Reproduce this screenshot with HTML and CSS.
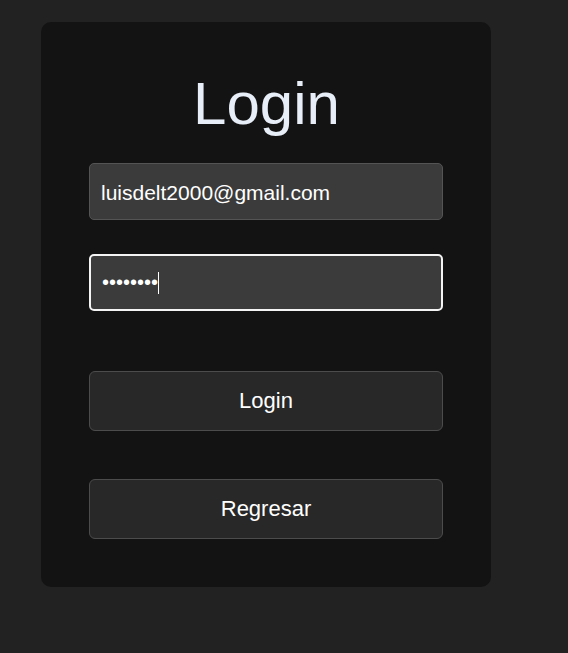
FILE: index.html
```html
<!DOCTYPE html>
<html lang="es">
<head>
<meta charset="utf-8">
<title>Login</title>
<link rel="stylesheet" href="styles.css">
</head>
<body>
  <main class="card">
    <h1 class="title">Login</h1>
    <form class="form">
      <input class="field" type="email" value="luisdelt2000@gmail.com">
      <div class="field field--focus"><span class="dots">••••••••</span><span class="caret"></span></div>
      <button type="button" class="btn btn--first">Login</button>
      <button type="button" class="btn btn--second">Regresar</button>
    </form>
  </main>
</body>
</html>
```
FILE: styles.css
```css
html, body {
  margin: 0;
  padding: 0;
  background: #222222;
  font-family: "Liberation Sans", Arial, sans-serif;
}
body {
  padding: 22px 0 0 41px;
}
.card {
  box-sizing: border-box;
  width: 450px;
  height: 565px;
  background: #131313;
  border-radius: 10px;
  padding: 52px 47px 0 48px;
}
.title {
  margin: 0;
  font-size: 60px;
  line-height: 60px;
  font-weight: 400;
  color: #e8eef8;
  text-align: center;
}
.form {
  display: flex;
  flex-direction: column;
  margin-top: 29px;
}
.field {
  box-sizing: border-box;
  width: 354px;
  height: 57px;
  background: #3b3b3b;
  border: 1px solid #545454;
  border-radius: 5px;
  color: #ffffff;
  font-family: "Liberation Sans", Arial, sans-serif;
  font-size: 21px;
  padding: 2px 11px 0;
  outline: none;
  margin: 0;
}
.field--focus {
  margin-top: 34px;
  border: 2px solid #f4f4f4;
  display: flex;
  align-items: center;
  padding: 0 11px;
}
.dots {
  font-size: 20px;
  letter-spacing: 0px;
  color: #ffffff;
}
.caret {
  display: inline-block;
  width: 1px;
  height: 22px;
  background: #ffffff;
  margin-left: 0;
}
.btn {
  box-sizing: border-box;
  width: 354px;
  height: 60px;
  background: #282828;
  border: 1px solid #4c4c4c;
  border-radius: 6px;
  color: #ffffff;
  font-family: "Liberation Sans", Arial, sans-serif;
  font-size: 22px;
  padding: 0;
  margin: 0;
}
.btn--first {
  margin-top: 60px;
}
.btn--second {
  margin-top: 48px;
}
```
